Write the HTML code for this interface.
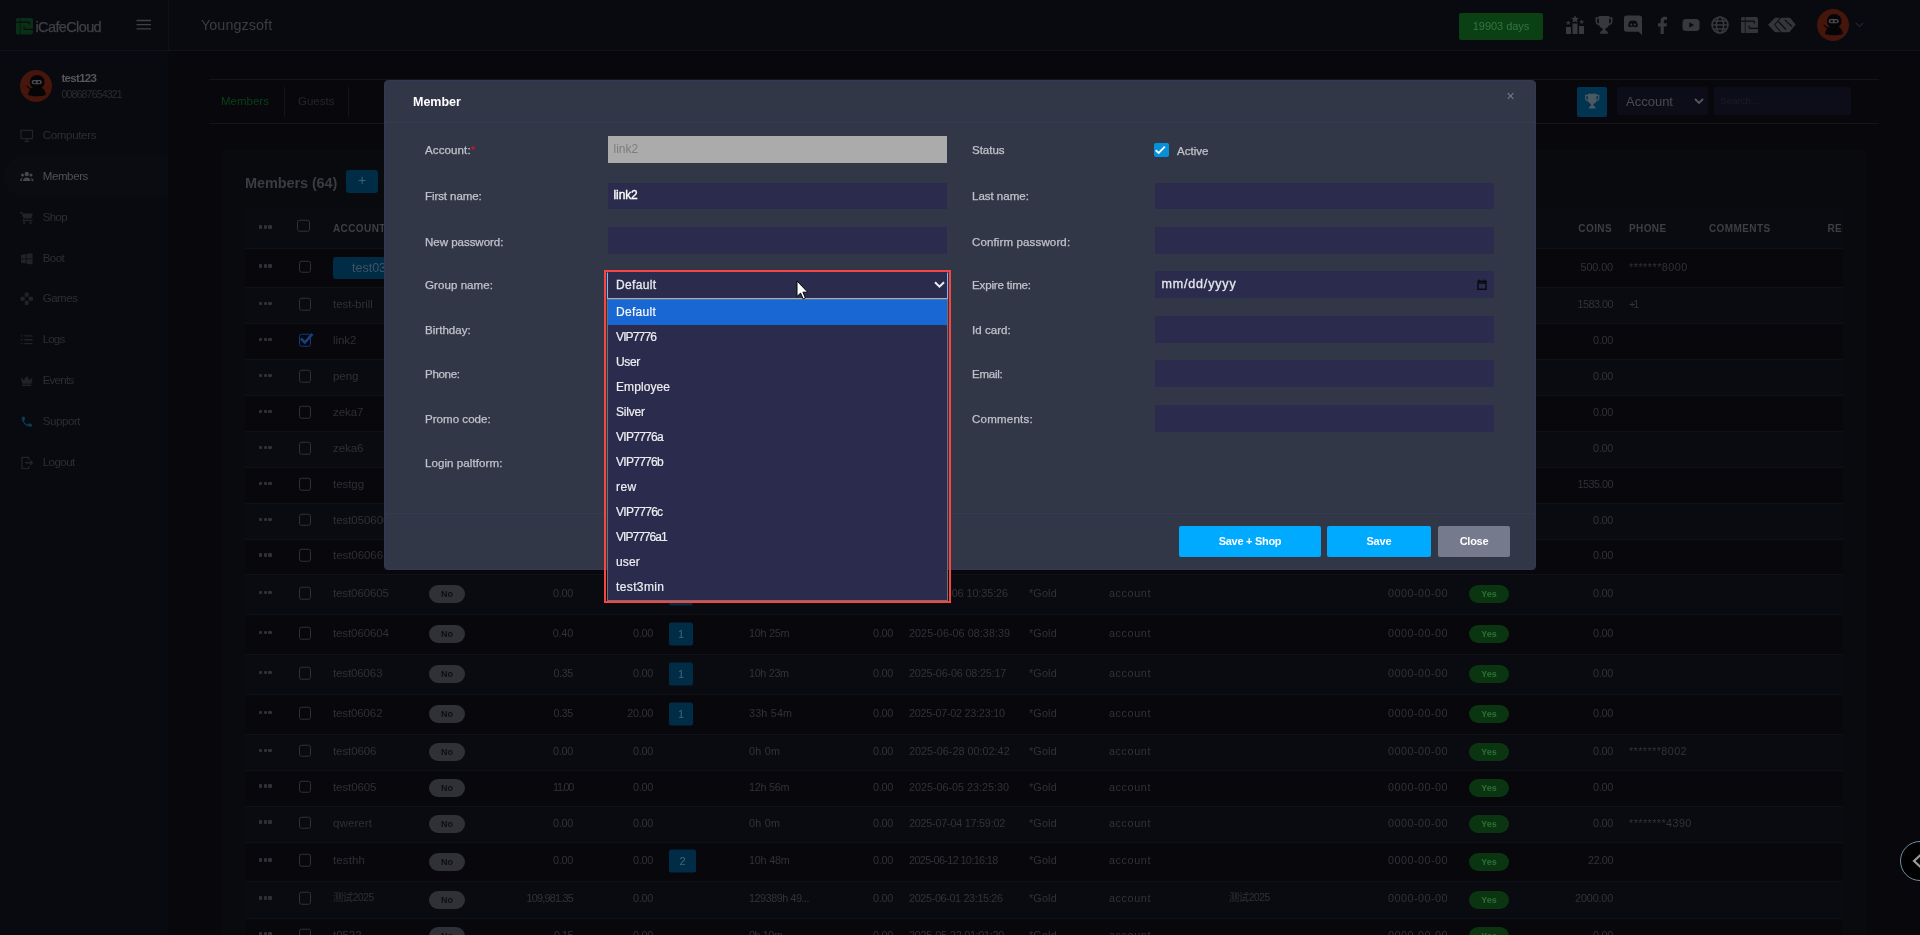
<!DOCTYPE html><html lang="en"><head><meta charset="utf-8"><title>Members - iCafeCloud</title><style>
*{box-sizing:border-box;margin:0;padding:0}
html,body{width:1920px;height:935px;overflow:hidden}
body{will-change:transform;background:#07070c;font-family:"Liberation Sans","Noto Sans CJK SC",sans-serif;font-size:11.5px;color:#37383d;position:relative}
.abs{position:absolute}
/* header */
#hdr{position:absolute;left:0;top:0;width:1920px;height:51px;background:#090a0f;border-bottom:1px solid #12131a}
#hdr .brand{position:absolute;left:0;top:0;width:169px;height:50px;border-right:1px solid #101117}
#hdr .logo-t{position:absolute;left:35.5px;top:16.7px;font-size:14.5px;letter-spacing:-.62px;-webkit-text-stroke:.25px #3f4045;color:#3f4045;font-weight:400;line-height:20px}
#hdr .title{position:absolute;left:201px;top:14.5px;font-size:14.3px;color:#3c3d42;line-height:20px;letter-spacing:.1px}
#hdr .days{position:absolute;left:1459px;top:13px;width:84px;height:27px;border-radius:2px;background:#0b4014;color:#35753f;font-size:11px;letter-spacing:-.05px;line-height:27px;text-align:center}
#hdr .ic{position:absolute;top:14px;width:22px;height:22px}
/* sidebar */
#side{position:absolute;left:0;top:51px;width:168px;height:884px;background:#090a0f}
#side .ava{position:absolute;left:20px;top:19px;width:32px;height:32px;border-radius:50%;background:#48160d;overflow:hidden}
#side .un{position:absolute;left:61.5px;top:20px;font-weight:700;font-size:11.5px;color:#55565b;line-height:14px}
#side .ph{position:absolute;left:61.5px;top:37px;font-size:10.5px;color:#2b2c31;line-height:13px}
#side .it{position:absolute;left:4px;width:164px;height:41px;border-radius:20px 0 0 20px;color:#2d2e33;font-size:11.5px;line-height:41px}
#side .it.act{background:#0b0c11;color:#505156}
#side .it span{position:absolute;left:38.7px;top:0}
#side .it svg{position:absolute;left:16px;top:14px;width:13.5px;height:13.5px}
/* tabs */
#tabs{position:absolute;left:209px;top:79px;width:1670px;height:45px;border-top:1px solid #14151b;border-bottom:1px solid #14151b}
#tabs .t{position:absolute;top:0;height:43px;line-height:42px;font-size:11.5px;color:#26272c;margin-left:-1px}
#tabs .sep{position:absolute;top:7px;width:1px;height:30px;background:#14151b}
/* card */
#card{position:absolute;left:222px;top:150px;width:1645px;height:800px;background:#090a0e;border-radius:4px}
#card h3{position:absolute;left:23px;top:23.5px;font-size:14.5px;font-weight:700;color:#3b3c41;line-height:18px;letter-spacing:-.1px}
#card .add{position:absolute;left:124px;top:20px;width:32px;height:23px;border-radius:3px;background:#002c46;color:#3f6076;text-align:center;line-height:21px;font-size:14px}
#tbl{position:absolute;left:23px;top:57px;width:1598px;height:743px;overflow:hidden}
.row{position:absolute;left:0;width:1598px;border-top:1px solid #101116}
.row.d{background:#07070c}
.row.l{background:#0a0b10}
.row>*{position:absolute;top:50%;transform:translateY(-50%);margin-top:-1.5px;white-space:nowrap;line-height:14px;color:#323338;font-size:10.8px}
.row.h>*{font-weight:700;font-size:10px;letter-spacing:.4px;color:#3e3f44;margin-top:1.7px}
.dots{margin-top:-1.6px!important;left:14px;width:13px;height:4px}
.dots i{position:absolute;top:0;width:3.4px;height:3.4px;background:#303136;border-radius:1px}
.cb{margin-top:-1.5px!important;width:12.5px;height:12.5px;border:1px solid #303136;border-radius:2.5px;background:transparent}
.pill{margin-top:-.2px!important;height:18px;border-radius:9px;text-align:center;font-size:9px!important;line-height:18px!important;font-weight:700}
.pill.no{left:184px;width:36px;background:#2f3136;color:#0d0e12!important}
.pill.yes{left:1224px;width:40px;background:#0a3510;color:#2b7235!important}
.bdg{margin-top:-.6px!important;left:424px;width:24px;height:23px;border-radius:2px;background:#002c46;color:#44647a!important;text-align:center;line-height:23px!important;font-size:11px!important}
/* modal */
#modal{position:absolute;left:384px;top:80px;width:1152px;height:490px;background:#323748;border-radius:4px;border:1px solid #343757;color:#c9cbd2}
#modal .mh{position:absolute;left:0;top:0;width:100%;height:42px;border-bottom:1px solid #353951}
#modal .mh b{position:absolute;left:28px;top:12.5px;font-size:12.5px;color:#fff;line-height:16px}
#modal .x{position:absolute;left:1121.5px;top:8px;font-size:14px;color:#777b92;line-height:14px}
#modal .mf{position:absolute;left:0;top:432px;width:100%;height:1px;background:#353951}
.lb{-webkit-text-stroke:.25px #c0c2ca;position:absolute;font-size:10.5px;line-height:14px;color:#c0c2ca;font-weight:400;white-space:nowrap;transform:scaleX(1.1);transform-origin:0 50%}
.inp{position:absolute;width:339px;height:27px;background:#2b2c4d;color:#fff;font-size:12px;line-height:25px;padding-left:5.5px;font-weight:400}
.btn{position:absolute;top:445px;height:31px;border-radius:2px;color:#fff;font-weight:700;font-size:11px;line-height:30px;text-align:center}
/* dropdown */
#red{position:absolute;left:604px;top:270px;width:347px;height:333px;border:2px solid #fa4343}
#sel{-webkit-text-stroke:.3px #e9e9ee;position:absolute;left:607px;top:272px;width:341px;height:27px;border:1px solid #85b4f5;border-top-color:#2b2c4d;background:#2b2c4d;color:#e9e9ee;font-size:12px;line-height:25px;padding-left:8px}
#list{position:absolute;left:607px;top:299px;width:341px;height:302px;border:1px solid #707070;background:#2b2c4d}
#list div{-webkit-text-stroke:.2px #eeeef2;height:25px;line-height:25px;padding-left:8px;font-size:12px;color:#eeeef2;white-space:nowrap}
#list div.s{background:#1967d2;color:#fff}
</style></head><body>
<div id="hdr">
<div class="brand"><svg class="abs" style="left:16px;top:18px" width="17" height="16.500" viewBox="0 0 17 16.500"><rect x="0" y="0" width="17" height="16.500" rx="1.800" fill="#0a2f17"/><path d="M4.200 0V16.500" fill="none" stroke="#090a0f" stroke-width=".9" stroke-opacity=".75"/><path d="M0 4.100H12.300Q13.400 4.100 13.400 5.200V6.600M17 11.400H9.200Q8.100 11.400 8.100 10.300V8.800" fill="none" stroke="#090a0f" stroke-width="1.200"/></svg><span class="logo-t">iCafeCloud</span>
<svg class="abs" style="left:136px;top:19px" width="16" height="12" viewBox="0 0 16 12"><path d="M0.5 1.5h14.5M0.5 5.7h14.5M0.5 9.9h14.5" stroke="#404146" stroke-width="1.3" fill="none"/></svg></div>
<div class="title">Youngzsoft</div>
<div class="days">19903 days</div>
<svg class="ic" style="left:1564px" viewBox="0 0 22 22"><g fill="#37383d"><rect x="2" y="13" width="5" height="7"/><rect x="8.5" y="9.5" width="5" height="10.5"/><rect x="15" y="12" width="5" height="8"/><path d="M11 1.300l1.200 2.500 2.700.3-2 1.800.6 2.600L11 7.200 8.500 8.500l.6-2.600-2-1.800 2.700-.3z"/><path d="M4.300 6.500l.7 1.500 1.700.2-1.300 1.100.4 1.600-1.500-.8-1.500.8.400-1.600-1.300-1.100 1.700-.2z"/><path d="M17.700 5.500l.7 1.500 1.700.2-1.300 1.100.4 1.600-1.500-.8-1.500.8.400-1.600-1.300-1.100 1.700-.2z"/></g></svg>
<svg class="ic" style="left:1593px" viewBox="0 0 22 22"><g fill="#37383d"><path d="M5.800 2h10.400v1.200h3.300v4.600c0 1.900-1.400 3.200-3.500 3.400-.7 1.600-1.900 2.700-3.500 3v2.600h1.400l1.500 3H6.600l1.500-3h1.400v-2.600c-1.600-.3-2.800-1.400-3.500-3-2.100-.2-3.500-1.500-3.500-3.400V3.200h3.300zM5.800 4.700H4.100v3.100c0 .9.600 1.600 1.700 1.800zm10.400 0v4.900c1.100-.2 1.700-.9 1.700-1.800V4.700z"/></g></svg>
<svg class="ic" style="left:1622px" viewBox="0 0 22 22"><path fill="#37383d" d="M4.500 1.500h13a2.500 2.500 0 0 1 2.500 2.500v17l-3.500-3.200H4.500A2.500 2.500 0 0 1 2 15.300V4a2.500 2.500 0 0 1 2.500-2.500z"/><path fill="#090a0f" d="M7.600 7.200c1-.5 2.100-.7 3.400-.7s2.400.2 3.400.7c1 1.500 1.500 3.200 1.400 5.100-.9.700-1.800 1.100-2.800 1.300l-.6-1c-.9.300-1.900.3-2.800 0l-.6 1c-1-.2-1.900-.6-2.800-1.300-.1-1.900.4-3.600 1.400-5.100z"/><circle cx="9.200" cy="10.600" r="1.100" fill="#37383d"/><circle cx="12.800" cy="10.600" r="1.100" fill="#37383d"/></svg>
<svg class="ic" style="left:1651px" viewBox="0 0 22 22"><path fill="#37383d" d="M12.800 20v-7.500h2.700l.5-3.200h-3.200V7.400c0-1 .4-1.600 1.700-1.600H16V3c-.4-.1-1.300-.2-2.300-.2-2.500 0-4.100 1.500-4.100 4.200v2.300H7v3.200h2.600V20z"/></svg>
<svg class="ic" style="left:1680px" viewBox="0 0 22 22"><rect x="2.500" y="5" width="17" height="12" rx="3.500" fill="#37383d"/><path d="M9.300 8.300l4.700 2.700-4.700 2.700z" fill="#090a0f"/></svg>
<svg class="ic" style="left:1709px" viewBox="0 0 22 22"><g fill="none" stroke="#37383d" stroke-width="1.600"><circle cx="11" cy="11" r="8"/><ellipse cx="11" cy="11" rx="3.600" ry="8"/><path d="M3 11h16M4.200 7h13.600M4.200 15h13.600"/></g></svg>
<svg class="abs" style="left:1740.5px;top:16.500px" width="17" height="16.500" viewBox="0 0 17 16.500"><rect x="0" y="0" width="17" height="16.500" rx="1.800" fill="#333438"/><path d="M4.200 0V16.500" fill="none" stroke="#090a0f" stroke-width=".9" stroke-opacity=".75"/><path d="M0 4.100H12.300Q13.400 4.100 13.400 5.200V6.600M17 11.400H9.200Q8.100 11.400 8.100 10.300V8.800" fill="none" stroke="#090a0f" stroke-width="1.200"/></svg>
<svg class="abs" style="left:1768px;top:16.900px" width="28" height="16" viewBox="0 0 28 16"><path fill="#343539" d="M7 .7H12L6 7.800 12.300 15.300H7L0 7.800zM13.300 .7H22L27.700 7.500 21.300 15.300H13.500L7.200 7.800z"/><path fill="none" stroke="#090a0f" stroke-width="1.100" d="M16.700 2.800L24 9.500M10.300 4.500L18 12.500"/></svg>
<svg class="abs" style="left:1817px;top:9px" width="32" height="32" viewBox="0 0 32 32"><circle cx="16" cy="16" r="16" fill="#46150c"/><ellipse cx="17.200" cy="12" rx="7.400" ry="7" fill="#050507"/><path d="M8 25c.8-5 3.800-8.500 9-8.500s8.200 3.500 9 8.500c-5.500 1.800-12.500 1.800-18 0z" fill="#050507"/><rect x="11.700" y="10" width="10" height="4.300" rx="2" fill="#4c4c50"/><rect x="13.400" y="11.200" width="2.500" height="2" rx=".4" fill="#050507"/><rect x="17.600" y="11.200" width="2.500" height="2" rx=".4" fill="#050507"/><path d="M6.800 16l5.200 4.200" stroke="#050507" stroke-width="1.300"/></svg>
<svg class="abs" style="left:1855px;top:22px" width="9" height="6" viewBox="0 0 9 6"><path d="M1 1l3.500 3.500L8 1" fill="none" stroke="#1d2533" stroke-width="1.200"/></svg>
</div>
<div id="side">
<svg class="abs" style="left:20px;top:19px" width="32" height="32" viewBox="0 0 32 32"><circle cx="16" cy="16" r="16" fill="#46150c"/><ellipse cx="17.200" cy="12" rx="7.400" ry="7" fill="#050507"/><path d="M8 25c.8-5 3.800-8.500 9-8.500s8.200 3.500 9 8.500c-5.500 1.800-12.500 1.800-18 0z" fill="#050507"/><rect x="11.700" y="10" width="10" height="4.300" rx="2" fill="#4c4c50"/><rect x="13.400" y="11.200" width="2.500" height="2" rx=".4" fill="#050507"/><rect x="17.600" y="11.200" width="2.500" height="2" rx=".4" fill="#050507"/><path d="M6.800 16l5.200 4.200" stroke="#050507" stroke-width="1.300"/></svg>
<div class="un" style="letter-spacing:-0.705px">test123</div><div class="ph" style="letter-spacing:-0.815px">008687654321</div>
<div class="it" style="top:64.1px"><svg viewBox="0 0 14 14"><path fill="none" stroke="#222328" stroke-width="1.300" d="M1 1.500h12v8.500H1zM4.500 12.800h5M7 10v2.800"/></svg><span style="letter-spacing:-0.305px">Computers</span></div>
<div class="it act" style="top:104.9px"><svg viewBox="0 0 14 14"><g fill="#46474c"><circle cx="7" cy="4.200" r="2.300"/><circle cx="2.600" cy="5.200" r="1.600"/><circle cx="11.400" cy="5.200" r="1.600"/><path d="M3 11.500c0-2.300 1.700-3.800 4-3.800s4 1.500 4 3.800zM0 11.500c0-1.900 1-3 2.700-3.200-.6.800-.8 1.900-.8 3.200zM14 11.500c0-1.900-1-3-2.700-3.200.6.800.8 1.900.8 3.200z"/></g></svg><span style="letter-spacing:-0.375px">Members</span></div>
<div class="it" style="top:145.7px"><svg viewBox="0 0 14 14"><g fill="#222328"><path d="M0 1h2.400l.6 1.500h10.500l-2 5.200H4.600l-.8 1.500h9.200v1.300H2.300l1.400-2.800L1.500 2.300H0z"/><circle cx="4.300" cy="12.300" r="1.200"/><circle cx="11" cy="12.300" r="1.200"/></g></svg><span style="letter-spacing:-0.664px">Shop</span></div>
<div class="it" style="top:186.5px"><svg viewBox="0 0 14 14"><path fill="#222328" d="M1 3l5-.8v4.500H1zM6.800 2.100L13 1.200v5.500H6.800zM1 7.500h5V12l-5-.8zM6.800 7.500H13V13l-6.200-.9z"/></svg><span style="letter-spacing:-0.564px">Boot</span></div>
<div class="it" style="top:227.3px"><svg viewBox="0 0 14 14"><g fill="#222328"><rect x="5" y="0.500" width="4" height="4.500" rx="1"/><rect x="5" y="9" width="4" height="4.500" rx="1"/><rect x="0.500" y="5" width="4.500" height="4" rx="1"/><rect x="9" y="5" width="4.500" height="4" rx="1"/></g></svg><span style="letter-spacing:-0.453px">Games</span></div>
<div class="it" style="top:268.1px"><svg viewBox="0 0 14 14"><path stroke="#222328" stroke-width="1.300" fill="none" d="M1 3h1.500M4.500 3H13M1 7h1.500M4.500 7H13M1 11h1.500M4.500 11H13"/></svg><span style="letter-spacing:-0.809px">Logs</span></div>
<div class="it" style="top:308.9px"><svg viewBox="0 0 14 14"><path fill="#222328" d="M1 3l3 3.500L7 2l3 4.500L13 3l-1.200 7H2.200zM2.200 11h9.600v1.500H2.200z"/></svg><span style="letter-spacing:-0.743px">Events</span></div>
<div class="it" style="top:349.7px"><svg viewBox="0 0 14 14"><path fill="#0b3c5a" transform="scale(.583)" d="M6.620 10.790c1.440 2.830 3.760 5.140 6.590 6.590l2.200-2.200c.27-.27.67-.36 1.020-.24 1.120.37 2.330.57 3.570.57.55 0 1 .45 1 1V20c0 .55-.45 1-1 1-9.390 0-17-7.610-17-17 0-.55.45-1 1-1h3.500c.55 0 1 .45 1 1 0 1.250.2 2.450.57 3.570.11.35.03.74-.25 1.020l-2.200 2.200z"/></svg><span style="letter-spacing:-0.411px">Support</span></div>
<div class="it" style="top:390.5px"><svg viewBox="0 0 14 14"><path fill="none" stroke="#222328" stroke-width="1.300" d="M9 4V1.500H2v11.500h7V10.500M5.500 7H13M10.500 4.500L13 7l-2.500 2.500"/></svg><span style="letter-spacing:-0.512px">Logout</span></div>
</div>
<div id="tabs">
<div class="t" style="left:13px;color:#0b4017">Members</div><div class="sep" style="left:75px"></div>
<div class="t" style="left:90px">Guests</div><div class="sep" style="left:139px"></div>
<div class="abs" style="left:1368px;top:7px;width:30px;height:30px;border-radius:2px;background:#003451"><svg class="abs" style="left:5.800px;top:4.500px" width="18.400" height="18.400" viewBox="0 0 22 22"><g fill="#4b5960"><path d="M5.800 2h10.400v1.200h3.300v4.600c0 1.900-1.400 3.200-3.500 3.400-.7 1.600-1.900 2.700-3.500 3v2.600h1.400l1.500 3H6.600l1.500-3h1.400v-2.600c-1.600-.3-2.800-1.400-3.500-3-2.100-.2-3.500-1.500-3.500-3.400V3.200h3.300zM5.800 4.700H4.100v3.100c0 .9.600 1.600 1.700 1.800zm10.400 0v4.900c1.100-.2 1.700-.9 1.700-1.800V4.700z"/></g></svg></div>
<div class="abs" style="left:1408px;top:7px;width:91px;height:28px;border-radius:2px;background:#0c0d19;color:#4a4b50;font-size:13px;line-height:29px;padding-left:9px">Account<svg class="abs" style="left:77px;top:11px" width="10" height="7" viewBox="0 0 10 7"><path d="M1 1l4 4 4-4" fill="none" stroke="#55565b" stroke-width="1.800"/></svg></div>
<div class="abs" style="left:1505px;top:7px;width:137px;height:28px;border-radius:2px;background:#0c0d19;color:#1c1d24;font-size:9.8px;line-height:27px;padding-left:6px">Search...</div>
</div>
<div id="card"><h3>Members (64)</h3><div class="add">+</div><div id="tbl">
<div class="row h l" style="top:0;height:41px;border-top:0"><span class="dots" style="margin-top:-.4px!important"><i style="left:0"></i><i style="left:4.700px"></i><i style="left:9.400px"></i></span><span class="cb" style="left:52px;top:20px"></span><span style="left:88px">ACCOUNT</span><span style="right:231px">COINS</span><span style="left:1384px">PHONE</span><span style="left:1464px">COMMENTS</span><span style="left:1582.500px">REI</span></div>
<div class="row d" style="top:41px;height:39px"><span class="dots"><i style="left:0"></i><i style="left:4.700px"></i><i style="left:9.400px"></i></span><span class="cb" style="left:53.500px"></span><span style="margin-top:0;left:88px;width:120px;height:22px;border-radius:3px;background:#002c46;color:#3d5565;line-height:22px;padding-left:19px;font-size:12.500px">test03:</span><span style="right:230px;letter-spacing:-0.089px">500.00</span><span style="left:1384px;letter-spacing:0.487px">*******8000</span></div>
<div class="row l" style="top:80px;height:36px"><span class="dots"><i style="left:0"></i><i style="left:4.700px"></i><i style="left:9.400px"></i></span><span class="cb" style="left:53.500px"></span><span style="left:88px;font-size:11.5px;color:#2f3035;letter-spacing:-.05px;">test-brill</span><span style="right:230px;letter-spacing:-0.506px">1583.00</span><span style="left:1384px;letter-spacing:-2.007px">+1</span></div>
<div class="row d" style="top:116px;height:36px"><span class="dots"><i style="left:0"></i><i style="left:4.700px"></i><i style="left:9.400px"></i></span><span class="cb" style="left:53.500px;border-color:#163a75"><svg class="abs" style="left:-1px;top:-3px" width="16" height="14" viewBox="0 0 16 14"><path d="M2 6.800l3.800 4L13.500 2.200" fill="none" stroke="#163f80" stroke-width="2.700"/></svg></span><span style="left:88px;font-size:11.5px;color:#2f3035;letter-spacing:-.05px;">link2</span><span style="right:230px;letter-spacing:-0.230px">0.00</span></div>
<div class="row l" style="top:152px;height:36px"><span class="dots"><i style="left:0"></i><i style="left:4.700px"></i><i style="left:9.400px"></i></span><span class="cb" style="left:53.500px"></span><span style="left:88px;font-size:11.5px;color:#2f3035;letter-spacing:-.05px;">peng</span><span style="right:230px;letter-spacing:-0.230px">0.00</span></div>
<div class="row d" style="top:188px;height:36px"><span class="dots"><i style="left:0"></i><i style="left:4.700px"></i><i style="left:9.400px"></i></span><span class="cb" style="left:53.500px"></span><span style="left:88px;font-size:11.5px;color:#2f3035;letter-spacing:-.05px;">zeka7</span><span style="right:230px;letter-spacing:-0.230px">0.00</span></div>
<div class="row l" style="top:224px;height:36px"><span class="dots"><i style="left:0"></i><i style="left:4.700px"></i><i style="left:9.400px"></i></span><span class="cb" style="left:53.500px"></span><span style="left:88px;font-size:11.5px;color:#2f3035;letter-spacing:-.05px;">zeka6</span><span style="right:230px;letter-spacing:-0.230px">0.00</span></div>
<div class="row d" style="top:260px;height:36px"><span class="dots"><i style="left:0"></i><i style="left:4.700px"></i><i style="left:9.400px"></i></span><span class="cb" style="left:53.500px"></span><span style="left:88px;font-size:11.5px;color:#2f3035;letter-spacing:-.05px;">testgg</span><span style="right:230px;letter-spacing:-0.506px">1535.00</span></div>
<div class="row l" style="top:296px;height:35.5px"><span class="dots"><i style="left:0"></i><i style="left:4.700px"></i><i style="left:9.400px"></i></span><span class="cb" style="left:53.500px"></span><span style="left:88px;font-size:11.5px;color:#2f3035;letter-spacing:-.05px;">test050606</span><span style="right:230px;letter-spacing:-0.230px">0.00</span></div>
<div class="row d" style="top:331.5px;height:35.5px"><span class="dots"><i style="left:0"></i><i style="left:4.700px"></i><i style="left:9.400px"></i></span><span class="cb" style="left:53.500px"></span><span style="left:88px;font-size:11.5px;color:#2f3035;letter-spacing:-.05px;">test06066</span><span style="right:230px;letter-spacing:-0.230px">0.00</span></div>
<div class="row l" style="top:367px;height:40px"><span class="dots"><i style="left:0"></i><i style="left:4.700px"></i><i style="left:9.400px"></i></span><span class="cb" style="left:53.500px"></span><span style="left:88px;font-size:11.5px;color:#2f3035;letter-spacing:-0.111px">test060605</span><span class="pill no">No</span><span style="right:1270px;letter-spacing:-0.230px">0.00</span><span style="right:1190px;letter-spacing:-0.230px">0.00</span><span class="bdg" style="width:24px">1</span><span style="left:504px;letter-spacing:-0.233px">10h 22m</span><span style="right:950px;letter-spacing:-0.230px">0.00</span><span style="left:664px;letter-spacing:-0.068px">2025-06-06 10:35:26</span><span style="left:784px;letter-spacing:0.157px">*Gold</span><span style="left:864px;letter-spacing:0.596px">account</span><span style="right:395px;letter-spacing:0.465px">0000-00-00</span><span class="pill yes">Yes</span><span style="right:230px;letter-spacing:-0.230px">0.00</span></div>
<div class="row d" style="top:407px;height:40px"><span class="dots"><i style="left:0"></i><i style="left:4.700px"></i><i style="left:9.400px"></i></span><span class="cb" style="left:53.500px"></span><span style="left:88px;font-size:11.5px;color:#2f3035;letter-spacing:-0.111px">test060604</span><span class="pill no">No</span><span style="right:1270px;letter-spacing:-0.180px">0.40</span><span style="right:1190px;letter-spacing:-0.230px">0.00</span><span class="bdg" style="width:24px">1</span><span style="left:504px;letter-spacing:-0.261px">10h 25m</span><span style="right:950px;letter-spacing:-0.230px">0.00</span><span style="left:664px;letter-spacing:0.043px">2025-06-06 08:38:39</span><span style="left:784px;letter-spacing:0.157px">*Gold</span><span style="left:864px;letter-spacing:0.596px">account</span><span style="right:395px;letter-spacing:0.465px">0000-00-00</span><span class="pill yes">Yes</span><span style="right:230px;letter-spacing:-0.230px">0.00</span></div>
<div class="row l" style="top:447px;height:40px"><span class="dots"><i style="left:0"></i><i style="left:4.700px"></i><i style="left:9.400px"></i></span><span class="cb" style="left:53.500px"></span><span style="left:88px;font-size:11.5px;color:#2f3035;letter-spacing:-0.124px">test06063</span><span class="pill no">No</span><span style="right:1270px;letter-spacing:-0.380px">0.35</span><span style="right:1190px;letter-spacing:-0.230px">0.00</span><span class="bdg" style="width:24px">1</span><span style="left:504px;letter-spacing:-0.319px">10h 23m</span><span style="right:950px;letter-spacing:-0.230px">0.00</span><span style="left:664px;letter-spacing:-0.162px">2025-06-06 08:25:17</span><span style="left:784px;letter-spacing:0.157px">*Gold</span><span style="left:864px;letter-spacing:0.596px">account</span><span style="right:395px;letter-spacing:0.465px">0000-00-00</span><span class="pill yes">Yes</span><span style="right:230px;letter-spacing:-0.230px">0.00</span></div>
<div class="row d" style="top:487px;height:40px"><span class="dots"><i style="left:0"></i><i style="left:4.700px"></i><i style="left:9.400px"></i></span><span class="cb" style="left:53.500px"></span><span style="left:88px;font-size:11.5px;color:#2f3035;letter-spacing:-0.124px">test06062</span><span class="pill no">No</span><span style="right:1270px;letter-spacing:-0.380px">0.35</span><span style="right:1190px;letter-spacing:-0.245px">20.00</span><span class="bdg" style="width:24px">1</span><span style="left:504px;letter-spacing:0.181px">33h 54m</span><span style="right:950px;letter-spacing:-0.230px">0.00</span><span style="left:664px;letter-spacing:-0.241px">2025-07-02 23:23:10</span><span style="left:784px;letter-spacing:0.157px">*Gold</span><span style="left:864px;letter-spacing:0.596px">account</span><span style="right:395px;letter-spacing:0.465px">0000-00-00</span><span class="pill yes">Yes</span><span style="right:230px;letter-spacing:-0.230px">0.00</span></div>
<div class="row l" style="top:527px;height:35.5px"><span class="dots"><i style="left:0"></i><i style="left:4.700px"></i><i style="left:9.400px"></i></span><span class="cb" style="left:53.500px"></span><span style="left:88px;font-size:11.5px;color:#2f3035;letter-spacing:-0.090px">test0606</span><span class="pill no">No</span><span style="right:1270px;letter-spacing:-0.230px">0.00</span><span style="right:1190px;letter-spacing:-0.230px">0.00</span><span style="left:504px;letter-spacing:0.237px">0h 0m</span><span style="right:950px;letter-spacing:-0.230px">0.00</span><span style="left:664px;letter-spacing:0.022px">2025-06-28 00:02:42</span><span style="left:784px;letter-spacing:0.157px">*Gold</span><span style="left:864px;letter-spacing:0.596px">account</span><span style="right:395px;letter-spacing:0.465px">0000-00-00</span><span class="pill yes">Yes</span><span style="right:230px;letter-spacing:-0.230px">0.00</span><span style="left:1384px;letter-spacing:0.414px">*******8002</span></div>
<div class="row d" style="top:562.5px;height:36px"><span class="dots"><i style="left:0"></i><i style="left:4.700px"></i><i style="left:9.400px"></i></span><span class="cb" style="left:53.500px"></span><span style="left:88px;font-size:11.5px;color:#2f3035;letter-spacing:-0.090px">test0605</span><span class="pill no">No</span><span style="right:1270px;letter-spacing:-1.265px">11.00</span><span style="right:1190px;letter-spacing:-0.230px">0.00</span><span style="left:504px;letter-spacing:-0.261px">12h 56m</span><span style="right:950px;letter-spacing:-0.230px">0.00</span><span style="left:664px;letter-spacing:-0.015px">2025-06-05 23:25:30</span><span style="left:784px;letter-spacing:0.157px">*Gold</span><span style="left:864px;letter-spacing:0.596px">account</span><span style="right:395px;letter-spacing:0.465px">0000-00-00</span><span class="pill yes">Yes</span><span style="right:230px;letter-spacing:-0.230px">0.00</span></div>
<div class="row l" style="top:598.5px;height:36px"><span class="dots"><i style="left:0"></i><i style="left:4.700px"></i><i style="left:9.400px"></i></span><span class="cb" style="left:53.500px"></span><span style="left:88px;font-size:11.5px;color:#2f3035;letter-spacing:0.093px">qwerert</span><span class="pill no">No</span><span style="right:1270px;letter-spacing:-0.230px">0.00</span><span style="right:1190px;letter-spacing:-0.230px">0.00</span><span style="left:504px;letter-spacing:0.237px">0h 0m</span><span style="right:950px;letter-spacing:-0.230px">0.00</span><span style="left:664px;letter-spacing:-0.226px">2025-07-04 17:59:02</span><span style="left:784px;letter-spacing:0.157px">*Gold</span><span style="left:864px;letter-spacing:0.596px">account</span><span style="right:395px;letter-spacing:0.465px">0000-00-00</span><span class="pill yes">Yes</span><span style="right:230px;letter-spacing:-0.230px">0.00</span><span style="left:1384px;letter-spacing:0.429px">********4390</span></div>
<div class="row d" style="top:634.5px;height:39.5px"><span class="dots"><i style="left:0"></i><i style="left:4.700px"></i><i style="left:9.400px"></i></span><span class="cb" style="left:53.500px"></span><span style="left:88px;font-size:11.5px;color:#2f3035;letter-spacing:0.095px">testhh</span><span class="pill no">No</span><span style="right:1270px;letter-spacing:-0.230px">0.00</span><span style="right:1190px;letter-spacing:-0.230px">0.00</span><span class="bdg" style="width:27px">2</span><span style="left:504px;letter-spacing:-0.204px">10h 48m</span><span style="right:950px;letter-spacing:-0.230px">0.00</span><span style="left:664px;letter-spacing:-0.615px">2025-06-12 10:16:18</span><span style="left:784px;letter-spacing:0.157px">*Gold</span><span style="left:864px;letter-spacing:0.596px">account</span><span style="right:395px;letter-spacing:0.465px">0000-00-00</span><span class="pill yes">Yes</span><span style="right:230px;letter-spacing:-0.425px">22.00</span></div>
<div class="row l" style="top:674px;height:36.5px"><span class="dots"><i style="left:0"></i><i style="left:4.700px"></i><i style="left:9.400px"></i></span><span class="cb" style="left:53.500px"></span><span style="left:88px;font-size:11.5px;color:#2f3035;letter-spacing:-.05px;font-size:10.2px;letter-spacing:-.35px">测试2025</span><span class="pill no">No</span><span style="right:1270px;letter-spacing:-0.755px">109,981.35</span><span style="right:1190px;letter-spacing:-0.230px">0.00</span><span style="left:504px;letter-spacing:-0.459px">129389h 49...</span><span style="right:950px;letter-spacing:-0.230px">0.00</span><span style="left:664px;letter-spacing:-0.347px">2025-06-01 23:15:26</span><span style="left:784px;letter-spacing:0.157px">*Gold</span><span style="left:864px;letter-spacing:0.596px">account</span><span style="left:984px;font-size:10.2px;letter-spacing:-.35px">测试2025</span><span style="right:395px;letter-spacing:0.465px">0000-00-00</span><span class="pill yes">Yes</span><span style="right:230px;letter-spacing:-0.163px">2000.00</span></div>
<div class="row d" style="top:710.5px;height:36px"><span class="dots"><i style="left:0"></i><i style="left:4.700px"></i><i style="left:9.400px"></i></span><span class="cb" style="left:53.500px"></span><span style="left:88px;font-size:11.5px;color:#2f3035;letter-spacing:-.05px;">t0522</span><span class="pill no">No</span><span style="right:1270px;letter-spacing:-0.505px">0.15</span><span style="right:1190px;letter-spacing:-0.230px">0.00</span><span style="left:504px;letter-spacing:-0.421px">0h 10m</span><span style="right:950px;letter-spacing:-0.230px">0.00</span><span style="left:664px;letter-spacing:-0.278px">2025-05-22 01:01:20</span><span style="left:784px;letter-spacing:0.157px">*Gold</span><span style="left:864px;letter-spacing:0.596px">account</span><span style="right:395px;letter-spacing:0.465px">0000-00-00</span><span class="pill yes">Yes</span><span style="right:230px;letter-spacing:-0.230px">0.00</span></div>
</div></div>
<div class="abs" style="left:1900px;top:841px;width:40px;height:40px;border-radius:50%;background:#000;border:1px solid #6f8fa3"><svg class="abs" style="left:10px;top:11px" width="12" height="16" viewBox="0 0 12 16"><path d="M10 1.500L3 8l7 6.500" fill="none" stroke="#9a9a9a" stroke-width="2.200"/></svg></div>
<div id="modal"><div class="mh"><b>Member</b></div><div class="x">×</div>
<label class="lb" style="left:39.5px;top:62.19999999999999px;letter-spacing:0.086px">Account:<span style="color:#ea1224;-webkit-text-stroke:0">*</span></label>
<label class="lb" style="left:39.5px;top:108.19999999999999px;letter-spacing:-0.088px">First name:</label>
<label class="lb" style="left:39.5px;top:153.5px;letter-spacing:-0.039px">New password:</label>
<label class="lb" style="left:39.5px;top:197.2px;letter-spacing:0.049px">Group name:</label>
<label class="lb" style="left:39.5px;top:241.7px;letter-spacing:0.012px">Birthday:</label>
<label class="lb" style="left:39.5px;top:286.2px;letter-spacing:-0.289px">Phone:</label>
<label class="lb" style="left:39.5px;top:330.7px;letter-spacing:0.018px">Promo code:</label>
<label class="lb" style="left:39.5px;top:375.2px;letter-spacing:0.061px">Login paltform:</label>
<label class="lb" style="left:586.5px;top:62.19999999999999px;letter-spacing:-0.037px">Status</label>
<label class="lb" style="left:586.5px;top:108.19999999999999px;letter-spacing:-0.031px">Last name:</label>
<label class="lb" style="left:586.5px;top:153.5px;letter-spacing:0.103px">Confirm password:</label>
<label class="lb" style="left:586.5px;top:197.2px;letter-spacing:-0.157px">Expire time:</label>
<label class="lb" style="left:586.5px;top:241.7px;letter-spacing:0.021px">Id card:</label>
<label class="lb" style="left:586.5px;top:286.2px;letter-spacing:-0.241px">Email:</label>
<label class="lb" style="left:586.5px;top:330.7px;letter-spacing:0.187px">Comments:</label>
<div class="inp" style="left:223px;top:55px;background:#ababab;color:#7d7d80;font-size:12px;line-height:27px">link2</div>
<div class="inp" style="left:223px;top:102px;height:26px;font-size:12px;-webkit-text-stroke:.35px #fff;letter-spacing:-.1px">link2</div>
<div class="inp" style="left:223px;top:146px;"></div>
<div class="abs" style="left:769px;top:62px;width:15px;height:14px;border-radius:2px;background:#0590d8"><svg class="abs" style="left:0;top:0" width="15" height="14" viewBox="0 0 15 14"><path d="M1.700 7.300l3 2.600L10.800 3.700" fill="none" stroke="#fff" stroke-width="1.800"/></svg></div>
<span class="lb" style="left:792px;top:63px;letter-spacing:0.007px">Active</span>
<div class="inp" style="left:769.5px;top:102px;height:26px"></div>
<div class="inp" style="left:769.5px;top:146px;"></div>
<div class="inp" style="left:769.5px;top:190px;font-size:12.5px;color:#e3e3ea;-webkit-text-stroke:.35px #e3e3ea;line-height:27px;padding-left:7px;letter-spacing:0.833px">mm/dd/yyyy<svg class="abs" style="left:322px;top:8px" width="10" height="11" viewBox="0 0 10 11"><path d="M1 2.200h8v8H1zM1 4h8" fill="none" stroke="#0a0a12" stroke-width="1.400"/><path d="M2.500 .5v2M7.500 .5v2" stroke="#0a0a12" stroke-width="1.200"/></svg></div>
<div class="inp" style="left:769.5px;top:235px;"></div>
<div class="inp" style="left:769.5px;top:279px;"></div>
<div class="inp" style="left:769.5px;top:324px;"></div>
<div class="mf"></div>
<div class="btn" style="left:794px;width:142px;background:#00aaff;letter-spacing:-0.284px">Save + Shop</div>
<div class="btn" style="left:942px;width:104px;background:#00aaff;letter-spacing:-0.123px">Save</div>
<div class="btn" style="left:1053px;width:72px;background:#757a8d;letter-spacing:-0.251px">Close</div>
</div>
<div id="sel"><span style="letter-spacing:0.354px">Default</span><svg class="abs" style="left:326px;top:8px" width="11" height="8" viewBox="0 0 11 8"><path d="M1 1.200l4.500 4.500L10 1.200" fill="none" stroke="#efefef" stroke-width="2"/></svg></div>
<div id="list">
<div class=s style="letter-spacing:0.283px">Default</div>
<div style="letter-spacing:-0.862px">VIP7776</div>
<div style="letter-spacing:-0.334px">User</div>
<div style="letter-spacing:0.080px">Employee</div>
<div style="letter-spacing:-0.218px">Silver</div>
<div style="letter-spacing:-0.714px">VIP7776a</div>
<div style="letter-spacing:-0.714px">VIP7776b</div>
<div style="letter-spacing:0.455px">rew</div>
<div style="letter-spacing:-0.705px">VIP7776c</div>
<div style="letter-spacing:-0.965px">VIP7776a1</div>
<div style="letter-spacing:0.164px">user</div>
<div style="letter-spacing:0.381px">test3min</div>
</div><div id="red"></div>
<svg class="abs" style="left:795.5px;top:279.8px" width="14" height="21" viewBox="0 0 14 21"><path d="M1 1v15.500l3.600-3.400 2.500 5.800 2.300-1-2.500-5.700h4.900z" fill="#fff" stroke="#05050a" stroke-width="1" stroke-linejoin="miter"/></svg>
</body></html>
